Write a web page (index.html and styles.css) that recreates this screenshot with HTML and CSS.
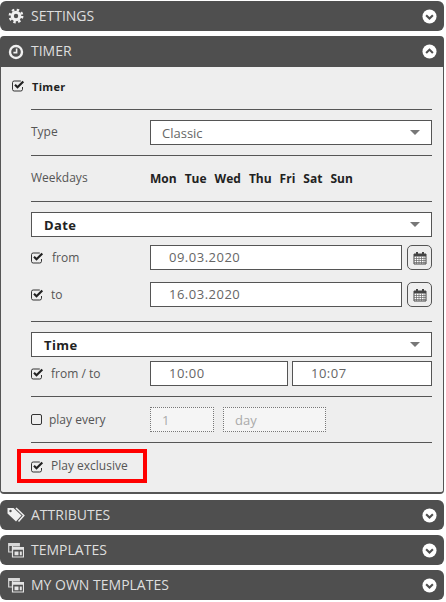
FILE: index.html
```html
<!DOCTYPE html>
<html>
    <head>
        <title>Timer</title>
        <link rel="stylesheet" href="styles.css">
    </head>
    <body>
        <svg class="defs" width="0" height="0">
            <symbol id="check" viewBox="0 0 13 12">
                <path d="M10.500 7v2.300a1.700 1.700 0 0 1-1.700 1.700H2.200A1.700 1.700 0 0 1 .500 9.300V2.700A1.700 1.700 0 0 1 2.200 1h6.600" fill="none" stroke="#333" stroke-width="1"/>
                <path d="M3 4.800l2.500 2.500L11.300 1.500" fill="none" stroke="#222" stroke-width="2.200"/>
            </symbol>
            <symbol id="down" viewBox="0 0 16 16">
                <circle cx="8" cy="8" r="7.500" fill="#fff"/>
                <path d="M4.400 6.600L8 10.200l3.600-3.600" fill="none" stroke="#4f4f4f" stroke-width="2.200"/>
            </symbol>
            <symbol id="up" viewBox="0 0 16 16">
                <circle cx="8" cy="8" r="7.500" fill="#fff"/>
                <path d="M4.400 9.600L8 6l3.600 3.600" fill="none" stroke="#4f4f4f" stroke-width="2.200"/>
            </symbol>
            <symbol id="windows" viewBox="0 0 16 16">
                <path d="M.700 1.700h10.600v2.300H4.500v6H.700z" fill="none" stroke="#d8d8d8" stroke-width="1.200"/>
                <path d="M.700 1.700h10.600v2.300H.700z" fill="#d8d8d8"/>
                <path d="M4.500 5.500h11v9.500h-11z" fill="none" stroke="#e4e4e4" stroke-width="1.200"/>
                <path d="M4.500 5.500h11v2.200h-11zM6.500 9.500h4v3.800h-4zM11.800 9.500h2v3.800h-2z" fill="#e4e4e4"/>
            </symbol>
            <symbol id="calendar" viewBox="0 0 14 14">
                <path d="M1 3h12v10H1z" fill="#fff" stroke="#444" stroke-width="1"/>
                <path d="M1 3h12v2.500H1z" fill="#444"/>
                <path d="M3 1h2v3H3zM9 1h2v3H9z" fill="#444"/>
                <path d="M1 7.500h12M1 9.500h12M1 11.500h12M3.500 5.500v7.500M6 5.500v7.500M8.500 5.500v7.500M11 5.500v7.500" stroke="#666" stroke-width="0.700"/>
            </symbol>
        </svg>

        <div class="bar">
            <svg class="bar-icon" width="16" height="16" viewBox="0 0 16 16">
                <circle cx="8" cy="8" r="5.300" fill="#f0f0f0"/>
                <circle cx="8" cy="8" r="6.200" fill="none" stroke="#f0f0f0" stroke-width="2.400" stroke-dasharray="2.400 2.470"/>
                <circle cx="8" cy="8" r="2.200" fill="#4f4f4f"/>
            </svg>
            <span class="bar-title">SETTINGS</span>
            <svg class="bar-toggle" width="15" height="15"><use href="#down"/></svg>
        </div>

        <div class="bar bar-open">
            <svg class="bar-icon" width="16" height="16" viewBox="0 0 16 16">
                <circle cx="8" cy="8" r="6" fill="none" stroke="#f0f0f0" stroke-width="2.400"/>
                <path d="M8.600 4.500v4.100H5.400" fill="none" stroke="#f0f0f0" stroke-width="1.600"/>
            </svg>
            <span class="bar-title">TIMER</span>
            <svg class="bar-toggle" width="15" height="15"><use href="#up"/></svg>
        </div>

        <div class="panel">
            <div class="timer-check">
                <svg class="check" width="13" height="12"><use href="#check"/></svg>
                <span class="strong">Timer</span>
            </div>

            <div class="group top-group">
                <div class="row">
                    <span class="label">Type</span>
                    <div class="field select grow"><span>Classic</span><i class="arrow"></i></div>
                </div>
            </div>

            <div class="group weekdays">
                <span class="label">Weekdays</span>
                <div class="days">
                    <span>Mon</span><span>Tue</span><span>Wed</span><span>Thu</span><span>Fri</span><span>Sat</span><span>Sun</span>
                </div>
            </div>

            <div class="group group-date">
                <div class="field select heading"><span>Date</span><i class="arrow"></i></div>
                <div class="row date-from">
                    <span class="label check-label">
                        <svg class="check" width="13" height="12"><use href="#check"/></svg>
                        <span class="from-text">from</span>
                    </span>
                    <div class="field grow value">09.03.2020</div>
                    <div class="cal-btn"><svg width="14" height="14"><use href="#calendar"/></svg></div>
                </div>
                <div class="row date-to">
                    <span class="label check-label">
                        <svg class="check" width="13" height="12"><use href="#check"/></svg>
                        <span>to</span>
                    </span>
                    <div class="field grow value">16.03.2020</div>
                    <div class="cal-btn"><svg width="14" height="14"><use href="#calendar"/></svg></div>
                </div>
            </div>

            <div class="group group-time">
                <div class="field select heading"><span>Time</span><i class="arrow"></i></div>
                <div class="row time-row">
                    <span class="label check-label">
                        <svg class="check" width="13" height="12"><use href="#check"/></svg>
                        <span>from / to</span>
                    </span>
                    <div class="field value time-a">10:00</div>
                    <div class="field value time-b">10:07</div>
                </div>
            </div>

            <div class="group">
                <div class="row">
                    <span class="label check-label">
                        <span class="empty-box"></span>
                        <span>play every</span>
                    </span>
                    <div class="field disabled every-num">1</div>
                    <div class="field disabled every-unit">day</div>
                </div>
            </div>

            <div class="exclusive">
                <svg class="check" width="13" height="12"><use href="#check"/></svg>
                <span class="label">Play exclusive</span>
                <div class="red-box"></div>
            </div>
        </div>

        <div class="bar">
            <svg class="bar-icon tag-icon" width="18" height="16" viewBox="0 0 18 16">
                <path d="M0.500 1h6l8 7.500-5.500 6-8.500-8z" fill="#f0f0f0"/>
                <circle cx="3.500" cy="4" r="1.200" fill="#4f4f4f"/>
                <path d="M9 1l7.800 7.500-5.300 6" fill="none" stroke="#f0f0f0" stroke-width="1.500"/>
            </svg>
            <span class="bar-title">ATTRIBUTES</span>
            <svg class="bar-toggle" width="15" height="15"><use href="#down"/></svg>
        </div>
        <div class="bar">
            <svg class="bar-icon" width="16" height="16"><use href="#windows"/></svg>
            <span class="bar-title">TEMPLATES</span>
            <svg class="bar-toggle" width="15" height="15"><use href="#down"/></svg>
        </div>
        <div class="bar">
            <svg class="bar-icon" width="16" height="16"><use href="#windows"/></svg>
            <span class="bar-title">MY OWN TEMPLATES</span>
            <svg class="bar-toggle" width="15" height="15"><use href="#down"/></svg>
        </div>
    </body>
</html>
```

FILE: styles.css
```css
body {
    margin: 0;
    padding-top: 1px;
    width: 444px;
    background-color: #fff;
    font-family: "Open Sans", sans-serif;
    font-size: 12px;
    color: #555;
}
.defs {
    position: absolute;
}
.bar {
    display: flex;
    align-items: center;
    height: 30px;
    margin-bottom: 5px;
    padding-left: 8px;
    padding-right: 7px;
    background-color: #4f4f4f;
    border-radius: 6px;
}
.bar-open {
    height: 31px;
    margin-bottom: 0;
    border-radius: 4px 4px 0 0;
}
.bar-icon {
    flex: none;
    margin-right: 7px;
}
.tag-icon {
    margin-left: -1px;
    margin-right: 6px;
}
.bar-title {
    flex: 1;
    font-size: 14px;
    line-height: 18px;
    padding-bottom: 1px;
    color: #dedede;
}
.bar-toggle {
    flex: none;
}
.panel {
    width: 401px;
    height: 425px;
    margin-bottom: 6px;
    padding-left: 30px;
    padding-right: 11px;
    background-color: #eee;
    border: 1px solid #555;
    border-top: none;
    border-bottom-width: 2px;
    border-radius: 0 0 4px 4px;
}
.timer-check {
    display: flex;
    align-items: center;
    height: 38px;
    margin-left: -19px;
    padding-bottom: 4px;
}
.timer-check .strong {
    margin-left: 7px;
    font-weight: 700;
    font-size: 11px;
    color: #222;
    letter-spacing: 0.3px;
}
.check {
    flex: none;
}
.group {
    padding: 10px 0;
    border-bottom: 1px solid #555;
}
.top-group {
    border-top: 1px solid #555;
}
.row {
    display: flex;
    align-items: center;
}
.label {
    flex: none;
    width: 119px;
    font-size: 12px;
    line-height: 16px;
    padding-bottom: 2px;
    color: #555;
}
.check-label {
    display: flex;
    align-items: center;
    gap: 7px;
    padding-bottom: 0;
}
.from-text {
    margin-left: 1px;
}
.field {
    box-sizing: border-box;
    height: 25px;
    display: flex;
    align-items: center;
    background-color: #fff;
    border: 1px solid #555;
    font-size: 13px;
    color: #666;
}
.grow {
    flex: 1;
}
.select {
    justify-content: space-between;
    padding-left: 11px;
    padding-right: 11px;
}
.arrow {
    width: 0;
    height: 0;
    border-left: 5px solid transparent;
    border-right: 5px solid transparent;
    border-top: 5px solid #777;
}
.heading {
    font-weight: 700;
    color: #222;
    letter-spacing: 0.4px;
    padding-left: 12px;
}
.weekdays {
    display: flex;
    align-items: center;
    height: 25px;
}
.days {
    display: flex;
    gap: 8px;
    font-size: 12px;
    font-weight: 700;
    color: #222;
    padding-bottom: 1px;
}
.group-date {
    padding-bottom: 14px;
}
.date-from {
    margin-top: 8px;
}
.date-to {
    margin-top: 12px;
}
.value {
    padding-left: 18px;
    padding-bottom: 2px;
    letter-spacing: 0.5px;
}
.cal-btn {
    flex: none;
    box-sizing: border-box;
    width: 25px;
    height: 25px;
    margin-left: 5px;
    display: flex;
    align-items: center;
    justify-content: center;
    border: 1px solid #555;
    border-radius: 5px;
}
.time-row {
    margin-top: 4px;
}
.time-a {
    width: 138px;
}
.time-b {
    width: 140px;
    margin-left: 4px;
}
.empty-box {
    flex: none;
    box-sizing: border-box;
    width: 11px;
    height: 11px;
    border: 1px solid #333;
    border-radius: 2px;
}
.disabled {
    border: 1px dotted #777;
    background-color: #f5f5f5;
    color: #aaa;
    padding-left: 11px;
}
.every-num {
    width: 64px;
}
.every-unit {
    width: 103px;
    margin-left: 9px;
}
.exclusive {
    position: relative;
    display: flex;
    align-items: center;
    gap: 7px;
    height: 47px;
}
.red-box {
    position: absolute;
    left: -14px;
    top: 6px;
    width: 122px;
    height: 26px;
    border: 4px solid #f00;
}
```
